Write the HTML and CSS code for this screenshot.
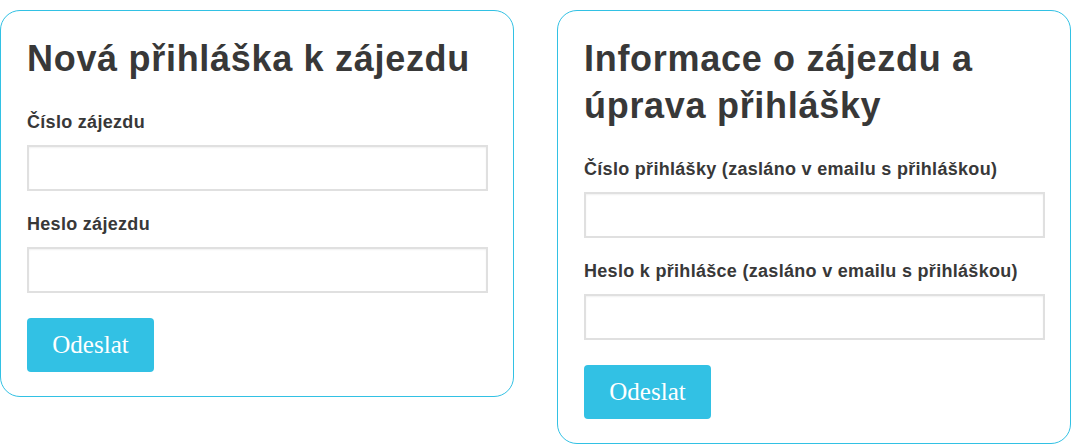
FILE: index.html
```html
<!DOCTYPE html>
<html lang="cs">
<head>
<meta charset="utf-8">
<title>Přihlášky</title>
<link rel="stylesheet" href="styles.css">
</head>
<body>
<div class="row">
  <form class="card">
    <h1 class="title">Nová přihláška k zájezdu</h1>
    <div class="group">
      <label class="label">Číslo zájezdu</label>
      <input class="field" type="text">
    </div>
    <div class="group">
      <label class="label">Heslo zájezdu</label>
      <input class="field" type="password">
    </div>
    <button class="btn" type="button">Odeslat</button>
  </form>
  <form class="card">
    <h1 class="title">Informace o zájezdu a úprava přihlášky</h1>
    <div class="group">
      <label class="label">Číslo přihlášky (zasláno v emailu s přihláškou)</label>
      <input class="field" type="text">
    </div>
    <div class="group">
      <label class="label">Heslo k přihlášce (zasláno v emailu s přihláškou)</label>
      <input class="field" type="password">
    </div>
    <button class="btn" type="button">Odeslat</button>
  </form>
</div>
</body>
</html>
```
FILE: styles.css
```css
html, body {
  margin: 0;
  padding: 0;
  background: #fff;
}
body {
  font-family: "Liberation Sans", Arial, sans-serif;
  color: #383838;
}
.row {
  display: flex;
  align-items: flex-start;
  gap: 43px;
  margin-top: 10px;
}
.card {
  box-sizing: border-box;
  width: 514px;
  flex: 0 0 514px;
  border: 1px solid #32c1e4;
  border-radius: 20px;
  padding: 24px 25px 24px 26px;
  display: flex;
  flex-direction: column;
  align-items: flex-start;
}
.title {
  margin: 0 0 30px;
  font-size: 36px;
  line-height: 47px;
  font-weight: bold;
  letter-spacing: 0.7px;
  color: #383838;
}
.group {
  align-self: stretch;
  display: flex;
  flex-direction: column;
  margin-bottom: 23px;
}
.group:last-of-type {
  margin-bottom: 25px;
}
.label {
  font-size: 18px;
  line-height: 20px;
  font-weight: bold;
  letter-spacing: 0.3px;
  margin-bottom: 13px;
}
.field {
  box-sizing: border-box;
  height: 46px;
  width: 100%;
  margin: 0;
  border: 2px solid #e0e0e0;
  box-shadow: inset 0 1px 2px rgba(0,0,0,0.06);
  background: #fff;
  outline: none;
}
.btn {
  box-sizing: border-box;
  height: 54px;
  width: 127px;
  border: 0;
  border-radius: 4px;
  background: #32c1e4;
  color: #fff;
  font-family: "Liberation Serif", "Times New Roman", serif;
  font-size: 25px;
  padding: 0;
}
```
